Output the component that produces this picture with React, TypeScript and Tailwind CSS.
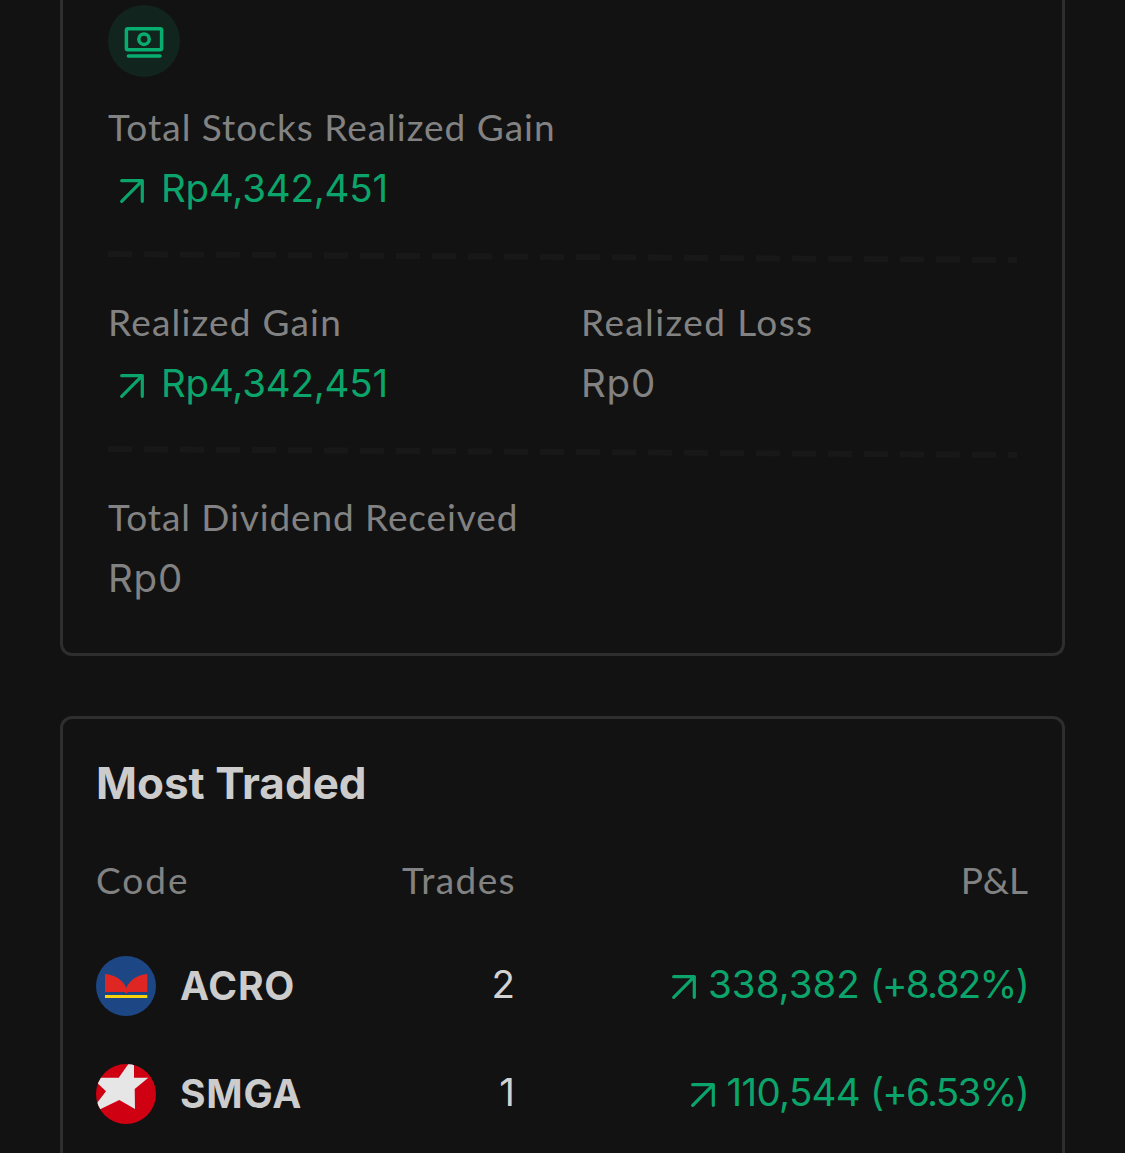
import React from "react";

interface TextProps {
    children: React.ReactNode;
    className?: string;
}

interface TradeRowProps {
    logo: React.ReactNode;
    code: React.ReactNode;
    trades: string;
    pnl: React.ReactNode;
}

function ArrowUpRight() {
    return (
        <svg width="26" height="26" viewBox="0 0 26 26" fill="none" stroke="currentColor" strokeWidth="3.2" strokeLinecap="round" strokeLinejoin="round" className="shrink-0">
            <path d="M2.7 2.7H23.3V23.3M23.3 2.7L2.7 23.3" />
        </svg>
    );
}

function MoneyIcon() {
    return (
        <svg width="72" height="72" viewBox="0 0 72 72" fill="none" stroke="#07ae70" strokeWidth="3.5" strokeLinecap="round">
            <rect x="18.4" y="23.7" width="35.2" height="21" rx="1.5" />
            <circle cx="36" cy="34.2" r="5.2" />
            <path d="M20.4 51H52" />
        </svg>
    );
}

function AcroLogo() {
    return (
        <svg width="60" height="60" viewBox="0 0 60 60" className="rounded-full">
            <rect width="60" height="60" fill="#1d4784" />
            <path d="M9 18C19 18.500 28 25 30.300 32C32.600 25 41.500 18.500 51.300 18V36H32L30.300 37.500L28.600 36H9Z" fill="#df2623" />
            <rect x="9" y="39" width="42.300" height="3" fill="#f8d30c" />
        </svg>
    );
}

function SmgaLogo() {
    return (
        <svg width="60" height="60" viewBox="0 0 60 60" className="rounded-full">
            <rect width="60" height="60" fill="#d00013" />
            <path d="M22.700 13.800L38 -8V13.800H52.300L38.700 25L39 45L23.300 36L-8.500 51.400L10 27.300L-4 13.800Z" fill="#e6e6e6" />
        </svg>
    );
}

function Label({ children, className = "" }: TextProps) {
    return (
        <div className={`pt-px font-['Lato',sans-serif] text-[37px] leading-[59px] text-[#828282] whitespace-nowrap ${className}`}>
            {children}
        </div>
    );
}

function Amount({ children, className = "" }: TextProps) {
    return (
        <div className={`font-['Inter',sans-serif] text-[38.5px] leading-[60px] whitespace-nowrap ${className}`}>
            {children}
        </div>
    );
}

function Gain({ children }: TextProps) {
    return (
        <div className="mt-0.5 flex items-center pl-[11px] gap-[16px] text-[#0ba56b]">
            <div className="pt-1.5">
                <ArrowUpRight />
            </div>
            <Amount className="tracking-[-0.2px]">{children}</Amount>
        </div>
    );
}

function Divider() {
    return (
        <svg width="910" height="12" viewBox="0 0 910 12" className="mt-[33px] mb-[28px] block">
            <path d="M0 3L909 9" stroke="#181818" strokeWidth="6" strokeDasharray="24 12" />
        </svg>
    );
}

function TradeRow({ logo, code, trades, pnl }: TradeRowProps) {
    return (
        <div className="flex h-[108px] items-center">
            <div className="flex w-[300px] items-center gap-6">
                {logo}
                <span className="font-['Inter',sans-serif] text-[39px] leading-[60px] font-bold tracking-[0.8px] text-[#cccccc]">{code}</span>
            </div>
            <Amount className="w-[119px] pb-1 text-right text-[#d2d2d2]">{trades}</Amount>
            <div className="flex flex-1 items-center justify-end gap-[11px] pr-px text-[#0ba56b]">
                <div className="pt-0.5">
                    <ArrowUpRight />
                </div>
                {pnl}
            </div>
        </div>
    );
}

function Pnl({ value, percent, className = "" }: { value: string; percent: string; className?: string }) {
    return (
        <Amount className="flex gap-[10px] pb-1">
            <span className={className}>{value}</span>
            <span className="tracking-[-1.7px]">({percent})</span>
        </Amount>
    );
}

export default function App() {
    return (
        <main className="h-[1153px] overflow-hidden bg-[#121212] px-[60px]">
            <section className="h-[656px] rounded-b-xl border-[3px] border-t-0 border-[#2e2e2e] px-[45px] pt-[5px]">
                <div className="mb-[19px] h-[72px] w-[72px] rounded-full bg-[#12241e]">
                    <MoneyIcon />
                </div>
                <Label className="tracking-[1px]">Total Stocks Realized Gain</Label>
                <Gain>Rp4,342,451</Gain>
                <Divider />
                <div className="flex">
                    <div className="w-[473px]">
                        <Label className="tracking-[1.2px]">Realized Gain</Label>
                        <Gain>Rp4,342,451</Gain>
                    </div>
                    <div>
                        <Label className="tracking-[1.4px]">Realized Loss</Label>
                        <Amount className="mt-0.5 text-[#828282] tracking-[0.8px]">Rp0</Amount>
                    </div>
                </div>
                <Divider />
                <Label className="tracking-[0.9px]">Total Dividend Received</Label>
                <Amount className="mt-0.5 text-[#828282] tracking-[0.8px]">Rp0</Amount>
            </section>

            <section className="mt-[60px] h-[500px] rounded-xl border-[3px] border-[#2e2e2e] px-[33px] pt-[34px]">
                <h2 className="font-['Inter',sans-serif] text-[44px] leading-[60px] font-bold text-[#cccccc]">Most Traded</h2>
                <div className="mt-[36px] mb-[23px] flex">
                    <Label className="w-[300px] tracking-[2px]">Code</Label>
                    <Label className="w-[120px] text-right tracking-[1.4px]">Trades</Label>
                    <Label className="flex-1 pr-px text-right">P&amp;L</Label>
                </div>
                <TradeRow
                    logo={<AcroLogo />}
                    code="ACRO"
                    trades="2"
                    pnl={<Pnl value="338,382" percent="+8.82%" />}
                />
                <TradeRow
                    logo={<SmgaLogo />}
                    code="SMGA"
                    trades="1"
                    pnl={<Pnl value="110,544" percent="+6.53%" className="tracking-[-0.7px]" />}
                />
            </section>
        </main>
    );
}
